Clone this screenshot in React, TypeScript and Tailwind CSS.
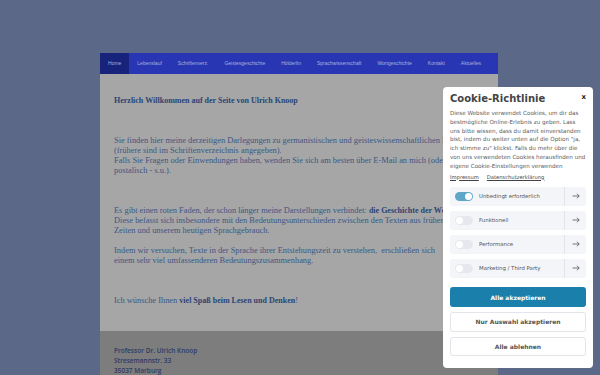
import React from "react";

const navItems = [
  "Home",
  "Lebenslauf",
  "Schriftenverz.",
  "Geistesgeschichte",
  "Hölderlin",
  "Sprachwissenschaft",
  "Wortgeschichte",
  "Kontakt",
  "Aktuelles",
];

const cookieRows = [
  { label: "Unbedingt erforderlich", on: true },
  { label: "Funktionell", on: false },
  { label: "Performance", on: false },
  { label: "Marketing / Third Party", on: false },
];

function Toggle({ on }: { on: boolean }) {
  return (
    <div
      className={
        on
          ? "w-[18px] h-[9px] rounded-full bg-[#5ea7c9] flex items-center justify-end px-[1px]"
          : "w-[18px] h-[9px] rounded-full bg-[#e6e8ed] flex items-center justify-start px-[1px]"
      }
    >
      <div className="w-[7px] h-[7px] rounded-full bg-white" />
    </div>
  );
}

export default function App() {
  return (
    <div className="relative w-[600px] h-[375px] overflow-hidden bg-[#5b6888]">
      <div className="ml-[100px] mt-[53px] w-[398px] bg-[#a6a6a6]">
        <nav className="flex h-[21px] overflow-hidden bg-[#2836b3] font-['Liberation_Sans',sans-serif] text-[5px] text-[#aab1dc]">
          {navItems.map((item, i) => (
            <div
              key={item}
              className={
                i === 0
                  ? "flex items-center px-[8px] bg-[#18247c]"
                  : "flex items-center px-[8px]"
              }
            >
              {item}
            </div>
          ))}
        </nav>

        <main className="overflow-hidden px-[14px] pt-[22px] pb-[25px] font-['Liberation_Serif',serif] text-[8.4px] leading-[10px] text-[#3c5684] whitespace-nowrap">
          <p className="font-bold text-[8px] text-[#2b4473]">
            Herzlich Willkommen auf der Seite von Ulrich Knoop
          </p>
          <p className="mt-[30px]">
            Sie finden hier meine derzeitigen Darlegungen zu germanistischen und geisteswissenschaftlichen Fragen
            <br />
            (frühere sind im Schriftenverzeichnis angegeben).
            <br />
            Falls Sie Fragen oder Einwendungen haben, wenden Sie sich am besten über E-Mail an mich (oder
            <br />
            postalisch - s.u.).
          </p>
          <p className="mt-[30px]">
            Es gibt einen roten Faden, der schon länger meine Darstellungen verbindet:{" "}
            <b className="text-[8px] text-[#2b4473]">die Geschichte der Wörter</b>.
            <br />
            Diese befasst sich insbesondere mit den Bedeutungsunterschieden zwischen den Texten aus früheren
            <br />
            Zeiten und unserem heutigen Sprachgebrauch.
          </p>
          <p className="mt-[10px]">
            Indem wir versuchen, Texte in der Sprache ihrer Entstehungszeit zu verstehen,&nbsp; erschließen sich
            <br />
            einem sehr viel umfassenderen Bedeutungszusammenhang.
          </p>
          <p className="mt-[30px]">
            Ich wünsche Ihnen <b className="text-[8px] text-[#2b4473]">viel Spaß beim Lesen und Denken</b>!
          </p>
        </main>

        <footer className="h-[60px] bg-[#7d7d7d] px-[14px] pt-[15px] font-['Open_Sans',sans-serif] font-semibold text-[6.5px] leading-[10px] text-[#2e3b66]">
          <p>Professor Dr. Ulrich Knoop</p>
          <p>Stresemannstr. 33</p>
          <p>35037 Marburg</p>
        </footer>
      </div>

      <div className="absolute left-[443px] top-[87px] w-[150px] h-[281px] rounded-[4px] bg-white px-[7px] pt-[5px] font-['DejaVu_Sans',sans-serif] text-[#555]">
        <div className="flex items-start justify-between">
          <h2 className="text-[10px] leading-[14px] font-bold text-[#444]">Cookie-Richtlinie</h2>
          <span className="text-[7px] leading-[8px] font-bold text-[#222] pt-[1px]">x</span>
        </div>
        <p className="mt-[3px] text-[5.6px] leading-[8.8px] text-[#5a5a5a]">
          Diese Website verwendet Cookies, um dir das bestmögliche Online-Erlebnis zu geben. Lass uns bitte wissen, dass du damit einverstanden bist, indem du weiter unten auf die Option "ja, ich stimme zu" klickst. Falls du mehr über die von uns verwendeten Cookies herausfinden und eigene Cookie-Einstellungen verwenden
        </p>
        <div className="mt-[2px] flex gap-[8px] text-[5.2px] leading-[8px] text-[#444] underline">
          <span>Impressum</span>
          <span>Datenschutzerklärung</span>
        </div>

        <div className="mt-[6px] flex flex-col gap-[4.5px]">
          {cookieRows.map((row) => (
            <div key={row.label} className="flex h-[19.5px] items-stretch rounded-[3px] bg-[#f4f5f8]">
              <div className="flex flex-1 items-center gap-[6px] pl-[5px]">
                <Toggle on={row.on} />
                <span className="text-[5.4px] text-[#555]">{row.label}</span>
              </div>
              <div className="w-[1px] bg-[#e2e4ea]" />
              <div className="flex w-[21px] items-center justify-center">
                <svg width="8" height="6" viewBox="0 0 8 6" fill="none" stroke="#555" strokeWidth="0.8">
                  <path d="M0.5 3H7.2M4.8 0.7L7.2 3L4.8 5.3" />
                </svg>
              </div>
            </div>
          ))}
        </div>

        <div className="mt-[9px] flex flex-col gap-[5px] text-[6px] font-bold">
          <div className="flex h-[20px] items-center justify-center rounded-[3px] bg-[#1a7fab] text-white">
            Alle akzeptieren
          </div>
          <div className="flex h-[19.5px] items-center justify-center rounded-[3px] border border-[#e2e4ea] bg-white text-[#555]">
            Nur Auswahl akzeptieren
          </div>
          <div className="flex h-[19.5px] items-center justify-center rounded-[3px] border border-[#e2e4ea] bg-white text-[#555]">
            Alle ablehnen
          </div>
        </div>
      </div>
    </div>
  );
}
